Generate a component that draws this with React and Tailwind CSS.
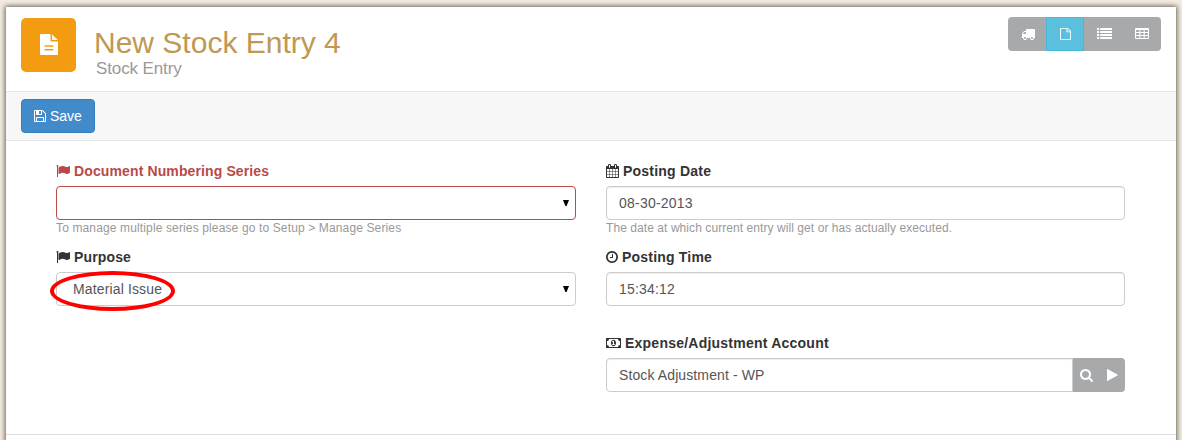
import React from "react";

const PATHS = {
  fileText: "M1596 476q14 14 28 36h-472v-472q22 14 36 28zm-476 164h544v1056q0 40-28 68t-68 28h-1344q-40 0-68-28t-28-68v-1600q0-40 28-68t68-28h800v544q0 40 28 68t68 28zm160 736v-64q0-14-9-23t-23-9h-704q-14 0-23 9t-9 23v64q0 14 9 23t23 9h704q14 0 23-9t9-23zm0-320v-64q0-14-9-23t-23-9h-704q-14 0-23 9t-9 23v64q0 14 9 23t23 9h704q14 0 23-9t9-23z",
  save: "M512 1536h768v-384h-768v384zm896 0h128v-896q0-14-10-38.5t-20-34.5l-281-281q-10-10-34-20t-39-10v416q0 40-28 68t-68 28h-576q-40 0-68-28t-28-68v-416h-128v1280h128v-416q0-40 28-68t68-28h832q40 0 68 28t28 68v416zm-384-928v-320q0-13-9.5-22.5t-22.5-9.5h-192q-13 0-22.5 9.5t-9.5 22.5v320q0 13 9.5 22.5t22.5 9.5h192q13 0 22.5-9.5t9.5-22.5zm640 32v928q0 40-28 68t-68 28h-1344q-40 0-68-28t-28-68v-1344q0-40 28-68t68-28h928q40 0 88 20t76 48l280 280q28 28 48 76t20 88z",
  file: "M1596 380q28 28 48 76t20 88v1152q0 40-28 68t-68 28h-1344q-40 0-68-28t-28-68v-1600q0-40 28-68t68-28h896q40 0 88 20t76 48zm-444-244v376h376q-10-29-22-41l-313-313q-12-12-41-22zm384 1528v-1024h-416q-40 0-68-28t-28-68v-416h-768v1536h1280z",
  truck: "M640 1408q0-52-38-90t-90-38-90 38-38 90 38 90 90 38 90-38 38-90zm-384-512h384v-256h-158q-13 0-22 9l-195 195q-9 9-9 22v30zm1280 512q0-52-38-90t-90-38-90 38-38 90 38 90 90 38 90-38 38-90zm256-1088v1024q0 15-4 26.5t-13.5 18.5-16.5 11.5-23.5 6-22.5 2-25.5 0-22.5-.5q0 106-75 181t-181 75-181-75-75-181h-384q0 106-75 181t-181 75-181-75-75-181h-64q-3 0-22.5.5t-25.5 0-22.5-2-23.5-6-16.5-11.5-13.5-18.5-4-26.5q0-26 19-45t45-19v-320q0-8-.5-35t0-38 2.5-34.5 6.5-37 14-30.5 22.5-30l198-198q19-19 50.5-32t58.5-13h160v-192q0-26 19-45t45-19h1024q26 0 45 19t19 45z",
  list: "M0 256h256v256h-256zM384 256h1408v256h-1408zM0 640h256v256h-256zM384 640h1408v256h-1408zM0 1024h256v256h-256zM384 1024h1408v256h-1408zM0 1408h256v256h-256zM384 1408h1408v256h-1408z",
  table: "M224 128h1344q66 0 113 47t47 113v1088q0 66-47 113t-113 47h-1344q-66 0-113-47t-47-113v-1088q0-66 47-113t113-47zM192 384v256h384v-256zM704 384v256h384v-256zM1216 384v256h384v-256zM192 768v256h384v-256zM704 768v256h384v-256zM1216 768v256h384v-256zM192 1152v256h384v-256zM704 1152v256h384v-256zM1216 1152v256h384v-256z",
  flag: "M320 256q0 72-64 110v1266q0 13-9.5 22.5t-22.5 9.5h-64q-13 0-22.5-9.5t-9.5-22.5v-1266q-64-38-64-110 0-53 37.5-90.5t90.5-37.5 90.5 37.5 37.5 90.5zm1472 64v763q0 25-12.5 38.5t-39.5 27.5q-215 116-369 116-61 0-123.5-22t-108.5-48-115.5-48-142.5-22q-192 0-464 146-17 9-33 9-26 0-45-19t-19-45v-742q0-32 31-55 21-14 79-43 236-120 421-120 107 0 200 29t219 88q38 19 88 19 54 0 117.5-21t110-47 88-47 54.5-21q26 0 45 19t19 45z",
  calendar: "M192 1664h288v-288h-288v288zm352 0h320v-288h-320v288zm-352-352h288v-320h-288v320zm352 0h320v-320h-320v320zm-352-384h288v-288h-288v288zm736 736h320v-288h-320v288zm-384-736h320v-288h-320v288zm768 736h288v-288h-288v288zm-384-352h320v-320h-320v320zm-352-864v-288q0-13-9.5-22.5t-22.5-9.5h-64q-13 0-22.5 9.5t-9.5 22.5v288q0 13 9.5 22.5t22.5 9.5h64q13 0 22.5-9.5t9.5-22.5zm736 864h288v-320h-288v320zm-384-384h320v-288h-320v288zm384 0h288v-288h-288v288zm32-480v-288q0-13-9.5-22.5t-22.5-9.5h-64q-13 0-22.5 9.5t-9.5 22.5v288q0 13 9.5 22.5t22.5 9.5h64q13 0 22.5-9.5t9.5-22.5zm384-64v1280q0 52-38 90t-90 38h-1408q-52 0-90-38t-38-90v-1280q0-52 38-90t90-38h128v-96q0-66 47-113t113-47h64q66 0 113 47t47 113v96h384v-96q0-66 47-113t113-47h64q66 0 113 47t47 113v96h128q52 0 90 38t38 90z",
  clock: "M1024 544v448q0 14-9 23t-23 9h-320q-14 0-23-9t-9-23v-64q0-14 9-23t23-9h224v-352q0-14 9-23t23-9h64q14 0 23 9t9 23zm416 352q0-148-73-273t-198-198-273-73-273 73-198 198-73 273 73 273 198 198 273 73 273-73 198-198 73-273zm224 0q0 209-103 385.5t-279.5 279.5-385.5 103-385.5-103-279.5-279.5-103-385.5 103-385.5 279.5-279.5 385.5-103 385.5 103 279.5 279.5 103 385.5z",
  money: "M64 256h1792q64 0 64 64v1152q0 64-64 64h-1792q-64 0-64-64v-1152q0-64 64-64zM384 384q0 106-75 181t-181 75v512q106 0 181 75t75 181h1152q0-106 75-181t181-75v-512q-106 0-181-75t-75-181zM960 480q150 0 235 124t85 292-85 292-235 124-235-124-85-292 85-292 235-124zM768 1152h384v-96h-128v-448h-114l-148 137 77 80q42-37 55-57h2v288h-128z",
  search: "M1216 832q0-185-131.5-316.5t-316.5-131.5-316.5 131.5-131.5 316.5 131.5 316.5 316.5 131.5 316.5-131.5 131.5-316.5zm512 832q0 52-38 90t-90 38q-54 0-90-38l-343-342q-179 124-399 124-143 0-273.5-55.5t-225-150-150-225-55.5-273.5 55.5-273.5 150-225 225-150 273.5-55.5 273.5 55.5 225 150 150 225 55.5 273.5q0 220-124 399l343 343q37 37 37 90z",
  play: "M1576 927l-1328 738q-23 13-39.5 3t-16.5-36v-1472q0-26 16.5-36t39.5 3l1328 738q23 13 23 31t-23 31z",
};

function Icon({ name, box = "0 0 1792 1792", className }) {
  return (
    <svg viewBox={box} preserveAspectRatio="none" className={`block shrink-0 ${className}`} fill="currentColor" fillRule="evenodd" aria-hidden="true">
      <path d={PATHS[name]} />
    </svg>
  );
}

function Field({ icon, box, iconClass, label, labelClass, help, helpClass, error, children }) {
  return (
    <div className="h-[86px]">
      <div className={`flex h-5 items-center gap-1 font-bold ${error ? "text-[#b94a48]" : "text-[#333]"}`}>
        <Icon name={icon} box={box} className={iconClass} />
        <span className={labelClass}>{label}</span>
      </div>
      <div className="mt-[5px]">{children}</div>
      {help && <p className={`text-[12px] leading-[17px] text-[#999] ${helpClass}`}>{help}</p>}
    </div>
  );
}

function Select({ value, error }) {
  return (
    <div className={`flex h-[34px] items-center justify-between rounded border bg-white pl-4 pr-1.5 tracking-[0.14px] text-[#555] ${error ? "border-[#b94a48]" : "border-[#ccc]"}`}>
      <span>{value}</span>
      <svg viewBox="0 0 6 6" className="block h-1.5 w-1.5" fill="#000"><path d="M0 0h6L3.6 6H2.4z" /></svg>
    </div>
  );
}

const INPUT = "flex h-[34px] items-center border border-[#ccc] bg-white px-3 text-[#555] shadow-[inset_0_1px_1px_rgba(0,0,0,0.075)]";

export default function App() {
  return (
    <div className="h-[440px] overflow-hidden bg-[#f4ece1] px-1.5 pt-[7px] font-['Liberation_Sans',Arial,sans-serif] text-[14px] leading-5">
      <main className="h-[450px] bg-white shadow-[0_0_5px_1px_rgba(40,35,25,0.7)]">
        <header className="flex h-[85px] items-start justify-between border-b border-[#e5e5e5] pl-[15px] pr-[15px] pt-2.5">
          <div className="flex">
            <div className="mt-px flex h-[54px] w-[55px] items-start justify-center rounded-[5px] bg-[#f39c12] pt-4 text-white">
              <Icon name="fileText" box="128 0 1536 1792" className="h-[21px] w-[18px]" />
            </div>
            <div className="ml-[18px] mt-[9px]">
              <h1 className="text-[30px] leading-[34px] text-[#c09853]">New Stock Entry 4</h1>
              <p className="ml-0.5 text-[17px] leading-[18px] tracking-[-0.12px] text-[#999]">Stock Entry</p>
            </div>
          </div>
          <nav className="flex h-[34px] w-[153px] overflow-hidden rounded bg-[#a7a9aa] text-white">
            <button className="flex w-[38px] items-center justify-center pl-0.5"><Icon name="truck" className="h-3.5 w-3.5" /></button>
            <button className="flex w-[38px] items-center justify-center border border-[#46b8da] bg-[#5bc0de]"><Icon name="file" box="128 0 1536 1792" className="h-3 w-[11px]" /></button>
            <button className="flex w-10 items-center justify-center pb-0.5"><Icon name="list" className="h-3.5 w-[15px]" /></button>
            <button className="flex w-[37px] items-center justify-center pr-px"><Icon name="table" box="64 0 1664 1792" className="h-3.5 w-[14px]" /></button>
          </nav>
        </header>
        <div className="h-[49px] border-b border-[#e5e5e5] bg-[#f7f7f7] px-[15px] pt-[7px]">
          <button className="flex h-[34px] w-[74px] items-center gap-1 rounded border border-[#357ebd] bg-[#428bca] pl-3 text-white">
            <Icon name="save" box="128 0 1536 1792" className="h-3.5 w-3" />
            <span>Save</span>
          </button>
        </div>
        <section className="grid h-[294px] grid-cols-[520px_519px] gap-x-[30px] border-b border-[#ddd] pl-[50px] pt-5">
          <div>
            <Field icon="flag" iconClass="h-3.5 w-3.5" label="Document Numbering Series" labelClass="tracking-[0.12px]" help="To manage multiple series please go to Setup > Manage Series" helpClass="tracking-[0.135px]" error>
              <Select value="" error />
            </Field>
            <Field icon="flag" iconClass="h-3.5 w-3.5" label="Purpose" labelClass="tracking-[0.14px]">
              <div className="relative">
                <Select value="Material Issue" />
                <div className="absolute -left-1.5 -top-px h-10 w-[125px] rounded-[50%] border-4 border-[#f00]" />
              </div>
            </Field>
          </div>
          <div>
            <Field icon="calendar" box="64 0 1664 1792" iconClass="h-3.5 w-[13px]" label="Posting Date" labelClass="tracking-[0.22px]" help="The date at which current entry will get or has actually executed." helpClass="tracking-[0.07px]">
              <div className={`${INPUT} rounded tracking-[0.22px]`}>08-30-2013</div>
            </Field>
            <Field icon="clock" box="128 0 1536 1792" iconClass="h-3.5 w-3" label="Posting Time" labelClass="tracking-[0.2px]">
              <div className={`${INPUT} rounded tracking-[0.18px]`}>15:34:12</div>
            </Field>
            <Field icon="money" box="0 0 1920 1792" iconClass="h-3.5 w-[15px]" label="Expense/Adjustment Account" labelClass="tracking-[0.23px]">
              <div className="flex">
                <div className={`${INPUT} w-[467px] rounded-l tracking-[0.11px]`}>Stock Adjustment - WP</div>
                <div className="flex h-[34px] flex-1 items-center gap-[14px] rounded-r bg-[#a7a9aa] pl-[7px] text-white">
                  <Icon name="search" box="64 0 1664 1792" className="h-3.5 w-[13px]" />
                  <Icon name="play" box="192 0 1408 1792" className="h-3.5 w-[11px]" />
                </div>
              </div>
            </Field>
          </div>
        </section>
      </main>
    </div>
  );
}
